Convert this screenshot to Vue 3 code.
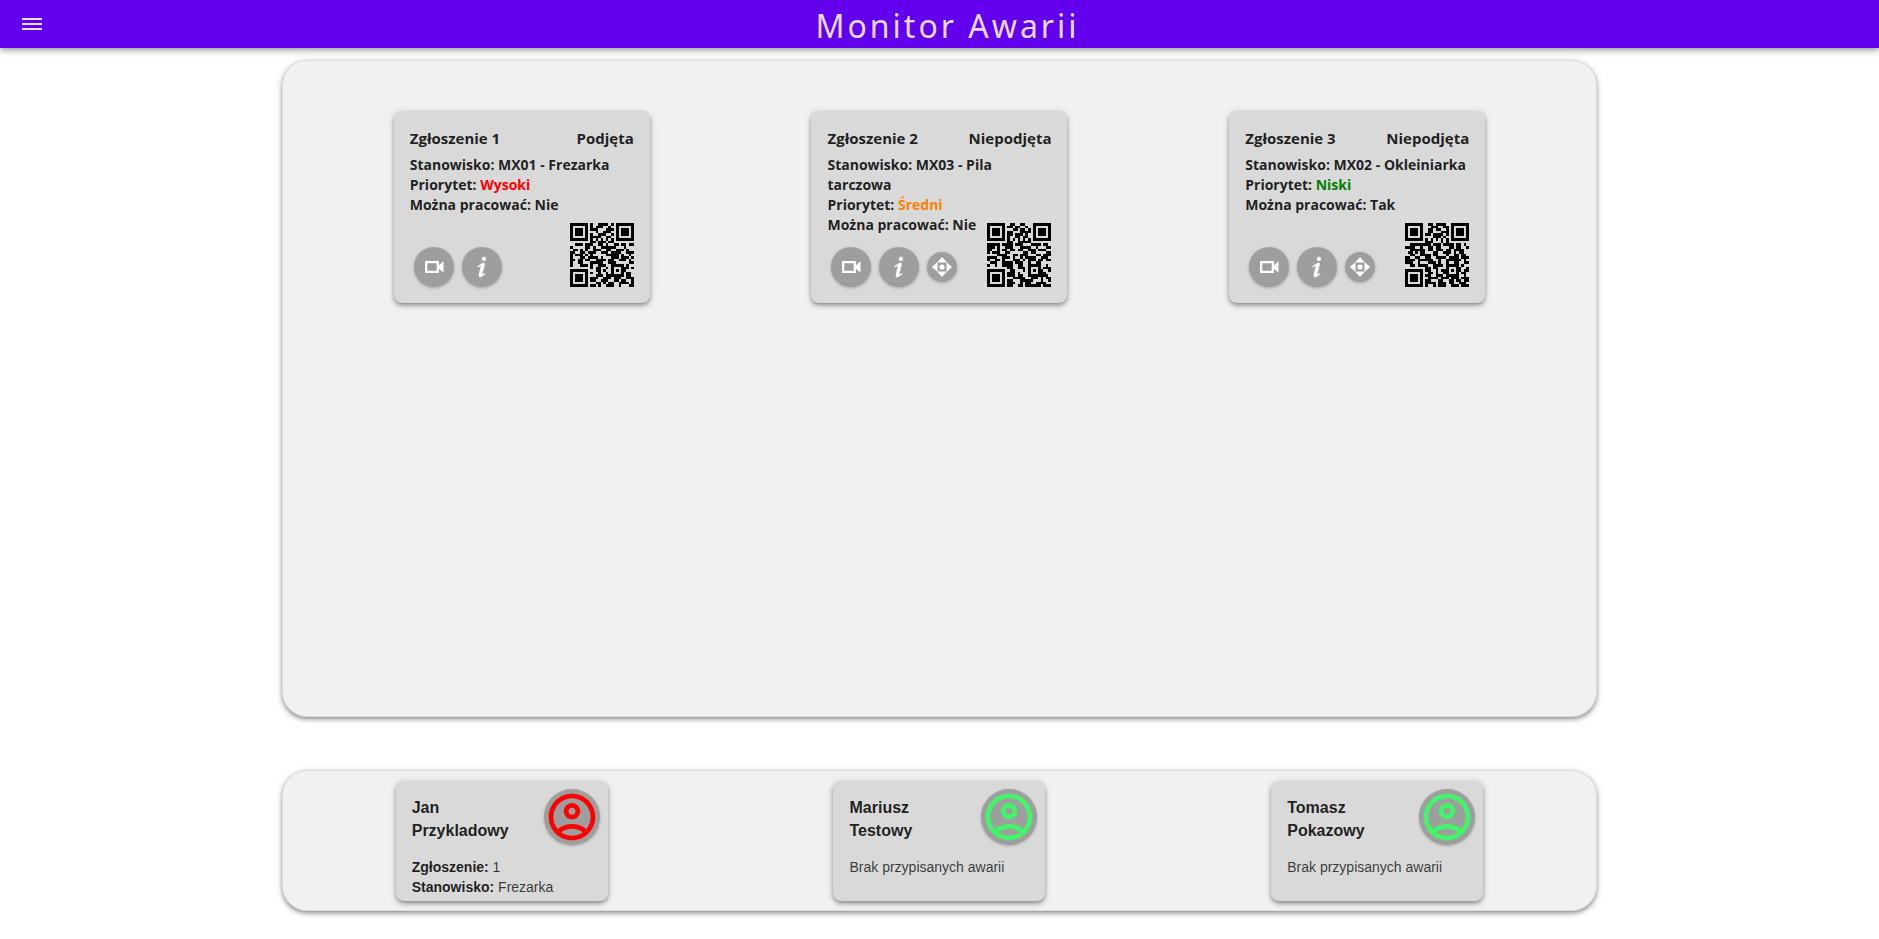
<script setup>
const tickets = [
  {
    id: 1,
    status: 'Podjęta',
    station: 'MX01 - Frezarka',
    priority: 'Wysoki',
    level: 'high',
    canWork: 'Nie',
    movable: false,
    code: [
      '#######.#..####.#.#######',
      '#.....#.#.###..#..#.....#',
      '#.###.#.###...###.#.###.#',
      '#.###.#...#..###..#.###.#',
      '#.###.#.#..###..#.#.###.#',
      '#.....#.####..##..#.....#',
      '#######.#.#.#.#.#.#######',
      '........##.###.##........',
      '..###.###..##.#..##.##.##',
      '#.....##.#..######...#...',
      '.##.#.#..###..##..###.#..',
      '##..##.###..###.####..###',
      '#.###.#.#.....#####.#..#.',
      '#...##.####.#...###.###.#',
      '##.##.##..####.##..###.#.',
      '#..##...#####..###.....##',
      '#...###.#..###..#####.#..',
      '........#.##..#.#...###.#',
      '#######...##.#..#.#.##...',
      '#.....#.#..#..#.#...#.##.',
      '#.###.#...###.#######.##.',
      '#.###.#.###..###.###..###',
      '#.###.#.##..###..##.##..#',
      '#.....#...##.#.##..####.#',
      '#######.##.#..###..#...##',
    ],
  },
  {
    id: 2,
    status: 'Niepodjęta',
    station: 'MX03 - Pila tarczowa',
    priority: 'Średni',
    level: 'medium',
    canWork: 'Nie',
    movable: true,
    code: [
      '#######..##..##...#######',
      '#.....#.##.##..#..#.....#',
      '#.###.#...##.##.#.#.###.#',
      '#.###.#.##...####.#.###.#',
      '#.###.#.##.###.#..#.###.#',
      '#.....#.#..##.##..#.....#',
      '#######.#.#.#.#.#.#######',
      '........##..#####........',
      '#####.####.###...####.##.',
      '###.#..###...####..#...##',
      '##..#.##.##.##..###.###..',
      '#.###..##.....##.##....##',
      '....####..##.###...##.###',
      '####..###.#..#.####..###.',
      '#..##.#...###.#.###.##.##',
      '.###..####.###..#..##....',
      '#..#..####..##..#####..#.',
      '........##..###.#...#.###',
      '#######..##...#.#.#.##..#',
      '#.....#.###.#...#...###..',
      '#.###.#.###.##..########.',
      '#.###.#...#####..###.#.##',
      '#.###.#.##...#####...#..#',
      '#.....#.###..#.##..####..',
      '#######.##..##.######.###',
    ],
  },
  {
    id: 3,
    status: 'Niepodjęta',
    station: 'MX02 - Okleiniarka',
    priority: 'Niski',
    level: 'low',
    canWork: 'Tak',
    movable: true,
    code: [
      '#######..##.####..#######',
      '#.....#...###..##.#.....#',
      '#.###.#..##.##..#.#.###.#',
      '#.###.#..##...###.#.###.#',
      '#.###.#.##.####.#.#.###.#',
      '#.....#....###.#..#.....#',
      '#######.#.#.#.#.#.#######',
      '........###...#.#........',
      '..########.###.####.##.#.',
      '####..#..##.##...##.##..#',
      '..######.##.###.##.####..',
      '.##.#.##...##..###.#.##..',
      '..##..####.##...#..##.##.',
      '##..##..##..####.####.###',
      '####.######..#..######.#.',
      '###..#...###.#..#..##..##',
      '..##.####..####.#####.#..',
      '........##.##...#...##..#',
      '#######.##..#.###.#.##.##',
      '#.....#..##.#..##...#.##.',
      '#.###.#.##..###.#####..#.',
      '#.###.#..####.###.###.###',
      '#.###.#.##...##..##.##.##',
      '#.....#.####.###.##..###.',
      '#######.#..#.###..###.###',
    ],
  },
]

const workers = [
  { first: 'Jan', last: 'Przykladowy', ticket: '1', station: 'Frezarka' },
  { first: 'Mariusz', last: 'Testowy' },
  { first: 'Tomasz', last: 'Pokazowy' },
]

const toPath = (rows) =>
  rows
    .map((row, y) => [...row.matchAll(/#+/g)].map((m) => `M${m.index} ${y}h${m[0].length}v1h-${m[0].length}z`).join(''))
    .join('')
</script>

<template>
  <div class="page">
    <header class="bar">
      <button class="menu" type="button" aria-label="Menu">
        <svg viewBox="0 0 20 12" width="20" height="12"><path d="M0 0h20v2H0zM0 5h20v2H0zM0 10h20v2H0z" /></svg>
      </button>
      <h1 class="title">Monitor Awarii</h1>
    </header>

    <main class="content">
      <section class="panel tickets" aria-label="Zgłoszenia">
        <article v-for="t in tickets" :key="t.id" class="card ticket">
          <div class="ticket-head">
            <h2>Zgłoszenie {{ t.id }}</h2>
            <h2>{{ t.status }}</h2>
          </div>
          <div class="ticket-body">
            <p>Stanowisko: {{ t.station }}</p>
            <p>Priorytet: <span :class="t.level">{{ t.priority }}</span></p>
            <p>Można pracować: {{ t.canWork }}</p>
          </div>
          <div class="ticket-foot">
            <button class="round" type="button" aria-label="Wideo">
              <svg viewBox="0 0 24 24" width="24" height="24"><path d="M3 6h14v4.200l4.500-4v11.600l-4.500-4V18H3zM5.300 8.300v7.400h9.400V8.300z" fill-rule="evenodd" /></svg>
            </button>
            <button class="round" type="button" aria-label="Informacje">
              <svg class="heavy" viewBox="0 0 24 24" width="30" height="30"><path d="M13.5 4a1.500 1.500 0 1 0 0 3 1.500 1.500 0 0 0 0-3M13.140 8.770C11.950 8.870 8.700 11.460 8.700 11.460c-.2.150-.140.140.020.420.160.270.140.290.330.160.200-.130.530-.340 1.080-.680 2.120-1.360.340 1.780-.570 7.070-.360 2.620 2 1.270 2.610.870.600-.390 2.210-1.500 2.370-1.610.220-.150.060-.270-.110-.520-.120-.170-.240-.050-.240-.050-.650.430-1.840 1.330-2 .760-.190-.570 1.030-4.480 1.700-7.170.110-.640.410-2.040-.750-1.940z" /></svg>
            </button>
            <button v-if="t.movable" class="round small" type="button" aria-label="Przenieś">
              <svg viewBox="0 0 24 24" width="24" height="24"><path d="M12 2l5 5.500H7zM12 22l5-5.500H7zM2 12l5.500-5v10zM22 12l-5.500-5v10z" /><circle cx="12" cy="12" r="2.600" /></svg>
            </button>
            <svg class="qr" viewBox="0 0 25 25" width="64" height="64" role="img" :aria-label="`Kod QR ${t.id}`" shape-rendering="crispEdges"><path :d="toPath(t.code)" /></svg>
          </div>
        </article>
      </section>

      <section class="panel workers" aria-label="Pracownicy">
        <article v-for="w in workers" :key="w.last" class="card worker">
          <div class="worker-head">
            <h2>{{ w.first }}<br />{{ w.last }}</h2>
            <button class="round avatar" :class="w.ticket ? 'busy' : 'free'" type="button" :aria-label="`${w.first} ${w.last}`">
              <svg viewBox="0 0 24 24" width="56" height="56"><path d="M12 2C6.480 2 2 6.480 2 12s4.480 10 10 10 10-4.480 10-10S17.520 2 12 2zM7.350 18.500C8.660 17.560 10.260 17 12 17s3.340.560 4.650 1.500C15.340 19.440 13.740 20 12 20s-3.340-.560-4.650-1.500zm10.790-1.380C16.450 15.800 14.320 15 12 15s-4.450.800-6.140 2.120C4.700 15.730 4 13.950 4 12c0-4.420 3.580-8 8-8s8 3.580 8 8c0 1.950-.700 3.730-1.860 5.120zM12 6c-1.930 0-3.500 1.570-3.500 3.500S10.070 13 12 13s3.500-1.570 3.500-3.500S13.930 6 12 6zm0 5c-.830 0-1.500-.670-1.500-1.500S11.170 8 12 8s1.500.670 1.500 1.500S12.830 11 12 11z" /></svg>
            </button>
          </div>
          <div class="worker-body">
            <template v-if="w.ticket">
              <p><strong>Zgłoszenie:</strong> {{ w.ticket }}</p>
              <p><strong>Stanowisko:</strong> {{ w.station }}</p>
            </template>
            <p v-else>Brak przypisanych awarii</p>
          </div>
        </article>
      </section>
    </main>
  </div>
</template>

<style>
html,
body {
  margin: 0;
  background: #fff;
}
</style>

<style scoped>
.page {
  min-height: 100vh;
  color: rgba(0, 0, 0, 0.87);
  font-family: "Segoe UI", "Open Sans", "Noto Sans", sans-serif;
}
.bar {
  display: flex;
  align-items: center;
  height: 48px;
  background: #6200ee;
  color: rgba(255, 255, 255, 0.87);
  box-shadow: 0 2px 4px -1px rgba(0, 0, 0, 0.2), 0 4px 5px rgba(0, 0, 0, 0.14), 0 1px 10px rgba(0, 0, 0, 0.12);
}
.menu {
  display: flex;
  align-items: center;
  justify-content: center;
  width: 64px;
  height: 48px;
  padding: 0;
  border: 0;
  background: none;
  color: inherit;
}
svg {
  display: block;
  fill: currentColor;
}
.title {
  flex: 1;
  margin: 0;
  padding: 4px 48px 0 0;
  text-align: center;
  font-family: "Segoe UI", "Noto Sans", sans-serif;
  font-size: 32px;
  font-weight: 400;
  line-height: 48px;
  letter-spacing: 3px;
}
.content {
  display: flex;
  flex-direction: column;
  align-items: center;
  gap: 53px;
  padding-top: 12px;
}
.panel {
  box-sizing: border-box;
  display: grid;
  grid-template-columns: repeat(3, 1fr);
  justify-items: center;
  width: 70%;
  border: 1px solid #ddd;
  border-radius: 25px;
  background: #f1f1f1;
}
.panel,
.card {
  box-shadow: 0 2px 4px -1px rgba(0, 0, 0, 0.3), 0 3px 5px rgba(0, 0, 0, 0.18), 0 1px 8px rgba(0, 0, 0, 0.12);
}
.tickets {
  align-items: start;
  min-height: 70vh;
  padding: 50px 30px;
}
.workers {
  align-items: center;
  min-height: 15vh;
}
.card {
  box-sizing: border-box;
  display: flex;
  flex-direction: column;
  border-radius: 8px;
  background: #d9d9d9;
}
h2,
p {
  margin: 0;
}
.ticket {
  width: 256px;
  min-height: 192px;
  padding: 16px;
}
.ticket-head {
  display: flex;
  justify-content: space-between;
}
.ticket-head h2 {
  font-size: 15px;
  font-weight: 700;
  line-height: 22px;
}
.ticket-body {
  padding-top: 6px;
  font-size: 14px;
  font-weight: 700;
  line-height: 20px;
}
.high {
  color: #ff0000;
}
.medium {
  color: #ff8000;
}
.low {
  color: #008000;
}
.ticket-foot {
  display: flex;
  align-items: center;
  gap: 8px;
  height: 40px;
  margin-top: auto;
  padding-left: 4px;
}
.round {
  display: flex;
  flex: none;
  align-items: center;
  justify-content: center;
  width: 40px;
  height: 40px;
  padding: 0;
  border: 0;
  border-radius: 50%;
  background: #9e9e9e;
  color: #fff;
  box-shadow: 0 1px 3px rgba(0, 0, 0, 0.24);
}
.small {
  width: 30px;
  height: 30px;
}
.heavy {
  stroke: currentColor;
  stroke-width: 0.4;
}
.qr {
  flex: none;
  align-self: flex-end;
  margin-left: auto;
  color: #000;
}
.worker {
  width: 212px;
  min-height: 120px;
  padding: 8px 8px 0 16px;
  font-family: "Liberation Sans", Arial, sans-serif;
}
.worker-head {
  display: flex;
  justify-content: space-between;
}
.worker-head h2 {
  padding-top: 7px;
  font-size: 16px;
  font-weight: 700;
  line-height: 23px;
}
.avatar {
  width: 56px;
  height: 56px;
}
.busy {
  color: #ff0000;
}
.free {
  color: #40f566;
}
.worker-body {
  padding-top: 12px;
  color: rgba(0, 0, 0, 0.75);
  font-size: 14px;
  font-weight: 400;
  line-height: 20px;
}
.worker-body strong {
  color: rgba(0, 0, 0, 0.87);
  font-weight: 700;
}
</style>
